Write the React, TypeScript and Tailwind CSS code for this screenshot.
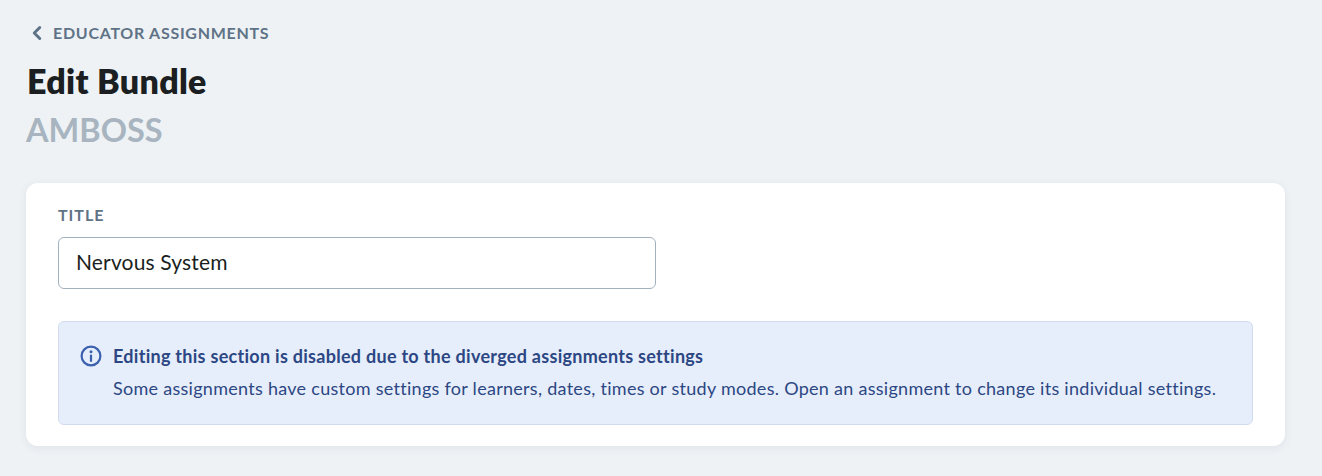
import { ChevronLeft } from 'lucide-react'

export default function App() {
  return (
    <div className="h-[476px] overflow-hidden bg-[#eef2f5] pl-[26px] pr-[37px] pt-[23px] font-['Lato',sans-serif]">
      {/* Breadcrumb */}
      <div className="flex h-5 items-center text-[#5f7387]">
        <ChevronLeft className="h-[22px] w-[22px]" strokeWidth={3.2} />
        <span className="ml-[5px] text-[16px] font-bold leading-5 tracking-[0.72px]">EDUCATOR ASSIGNMENTS</span>
      </div>

      {/* Page title */}
      <h1 className="mt-[18px] pl-[1px] text-[34px] font-extrabold leading-10 tracking-[0.3px] text-[#1b1f21]">Edit Bundle</h1>
      <h2 className="mt-[9px] text-[32.5px] font-bold leading-10 text-[#a8b5c0]">AMBOSS</h2>

      {/* Card */}
      <div className="mt-[33px] h-[263px] rounded-xl bg-white px-8 pt-[23px] shadow-[0_2px_8px_rgba(50,70,90,0.08)]">
        <label className="block text-[16px] font-bold leading-[18px] tracking-[1px] text-[#5f7387]">TITLE</label>
        <div className="mt-[13px] flex h-[52px] w-[598px] items-center rounded-md border border-[#a3b1bd] bg-white px-[17px] pb-[2px] text-[21px] tracking-[0.15px] text-[#1b1f21]">
          Nervous System
        </div>

        {/* Notice */}
        <div className="mt-8 flex h-[104px] rounded-md border border-[#d0dcee] bg-[#e7eefb] pl-[21px] pt-[21px] text-[#2c4783]">
          <svg className="mt-[2px] h-[22px] w-[22px] shrink-0" viewBox="0 0 22 22" fill="none">
            <circle cx="11" cy="11" r="9.4" stroke="#3b60ad" strokeWidth="2.2" />
            <circle cx="11" cy="6.8" r="1.5" fill="#3b60ad" />
            <path d="M11 10.5v5.5" stroke="#3b60ad" strokeWidth="2.2" strokeLinecap="round" />
          </svg>
          <div className="ml-[11px]">
            <p className="text-[18px] font-bold leading-[26px] tracking-[0.28px]">Editing this section is disabled due to the diverged assignments settings</p>
            <p className="mt-[6px] text-[18px] leading-[26px] tracking-[0.28px]">
              Some assignments have custom settings for learners, dates, times or study modes. Open an assignment to change its individual settings.
            </p>
          </div>
        </div>
      </div>
    </div>
  )
}
